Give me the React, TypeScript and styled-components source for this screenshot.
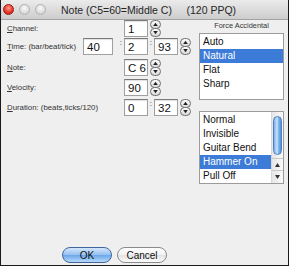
import React from 'react'
import styled, { createGlobalStyle } from 'styled-components'

const Global = createGlobalStyle`
  html, body {
    margin: 0;
    padding: 0;
    background: #fff;
  }
`

const Window = styled.div`
  width: 289px;
  height: 266px;
  box-sizing: border-box;
  border: 1px solid #1a1a1a;
  border-top: none;
  background: #efefef;
  display: flex;
  flex-direction: column;
  font-family: 'Liberation Sans', Arial, sans-serif;
  color: #1b1b1b;
`

const TitleBar = styled.div`
  height: 19px;
  flex: none;
  display: flex;
  align-items: center;
  padding-left: 2px;
  background: linear-gradient(#ebebeb, #cdcdcd);
  border-bottom: 1px solid #a3a3a3;
`

const Light = styled.span<{ $red?: boolean }>`
  width: 11px;
  height: 11px;
  border-radius: 50%;
  margin-right: 5px;
  box-sizing: border-box;
  border: 1px solid ${(p) => (p.$red ? '#9c1b14' : '#b0b0b0')};
  background: ${(p) =>
    p.$red
      ? 'radial-gradient(circle at 50% 35%, #ff9c8c 0%, #e63b2e 55%, #b81d12 100%)'
      : 'radial-gradient(circle at 50% 35%, #fafafa 0%, #dedede 60%, #c4c4c4 100%)'};
`

const Title = styled.span`
  margin-left: 10px;
  font-size: 10.5px;
  white-space: pre;
  color: #262626;
`

const Body = styled.div`
  display: flex;
  flex: 1;
`

const LeftCol = styled.div`
  width: 198px;
  padding-left: 6px;
  box-sizing: border-box;
`

const Row = styled.div<{ $top: number }>`
  display: flex;
  align-items: center;
  height: 17px;
  margin-top: ${(p) => p.$top}px;
`

const Label = styled.span<{ $w: number }>`
  width: ${(p) => p.$w}px;
  flex: none;
  font-size: 7.8px;
  color: #333;
  white-space: nowrap;
`

const Field = styled.div<{ $w: number }>`
  width: ${(p) => p.$w}px;
  height: 17px;
  flex: none;
  box-sizing: border-box;
  background: #fff;
  border: 1px solid #a0a0a0;
  border-top-color: #7a7a7a;
  box-shadow: inset 0 1px 1px rgba(0, 0, 0, 0.12);
  font-size: 11.5px;
  line-height: 16px;
  padding-left: 3px;
  color: #111;
  white-space: nowrap;
  overflow: hidden;
`

const Colon = styled.span<{ $w: number }>`
  width: ${(p) => p.$w}px;
  flex: none;
  align-self: flex-start;
  text-align: right;
  padding-right: 2px;
  box-sizing: border-box;
  font-size: 8px;
  line-height: 10px;
  color: #333;
`

const SpinWrap = styled.span`
  margin-left: 2px;
  display: flex;
`

const Spinner = () => (
  <SpinWrap>
    <svg width="11" height="17" viewBox="0 0 11 17">
      <defs>
        <linearGradient id="sg" x1="0" y1="0" x2="0" y2="1">
          <stop offset="0" stopColor="#ffffff" />
          <stop offset="1" stopColor="#d6d6d6" />
        </linearGradient>
      </defs>
      <rect x="0.5" y="0.5" width="10" height="8" rx="4" fill="url(#sg)" stroke="#6e6e6e" />
      <rect x="0.5" y="8.5" width="10" height="8" rx="4" fill="url(#sg)" stroke="#6e6e6e" />
      <path d="M3.2 6 L5.5 2.8 L7.8 6 Z" fill="#222" />
      <path d="M3.2 11 L5.5 14.2 L7.8 11 Z" fill="#222" />
    </svg>
  </SpinWrap>
)

const RightCol = styled.div`
  width: 85px;
  display: flex;
  flex-direction: column;
`

const GroupLabel = styled.div`
  height: 13px;
  font-size: 7.4px;
  line-height: 11px;
  text-align: center;
  color: #333;
`

const ListBox = styled.div<{ $h: number; $top: number }>`
  height: ${(p) => p.$h}px;
  margin-top: ${(p) => p.$top}px;
  box-sizing: border-box;
  background: #fff;
  border: 1px solid #9b9b9b;
  padding-top: 1px;
  display: flex;
`

const Items = styled.div`
  flex: 1;
`

const Item = styled.div<{ $sel?: boolean }>`
  height: 14px;
  line-height: 14px;
  padding-left: 3px;
  font-size: 10px;
  color: ${(p) => (p.$sel ? '#fff' : '#111')};
  background: ${(p) => (p.$sel ? '#3c7bd8' : 'transparent')};
`

const ScrollBar = styled.div`
  width: 11px;
  display: flex;
  flex-direction: column;
  border-left: 1px solid #d8d8d8;
  background: linear-gradient(90deg, #e6e6e6, #fafafa);
  margin-top: -1px;
`

const Thumb = styled.div`
  margin: 4px 1px 0;
  height: 38px;
  border-radius: 5px;
  border: 1px solid #4f7fc2;
  background: linear-gradient(90deg, #7aaeea, #cfe4fb 45%, #8bbcf0 60%, #4d8fe0);
`

const Arrow = styled.div<{ $top: number }>`
  margin-top: ${(p) => p.$top}px;
  height: 12px;
  display: flex;
  align-items: center;
  justify-content: center;
  border-top: 1px solid #c9c9c9;
`

const Footer = styled.div`
  margin-top: auto;
  display: flex;
  gap: 5px;
  padding: 0 0 2px 61px;
`

const Button = styled.div<{ $primary?: boolean }>`
  width: 50px;
  height: 16px;
  box-sizing: border-box;
  border-radius: 8px;
  display: flex;
  align-items: center;
  justify-content: center;
  font-size: 10px;
  color: #111;
  border: 1px solid ${(p) => (p.$primary ? '#40669e' : '#8a8a8a')};
  background: ${(p) =>
    p.$primary
      ? 'linear-gradient(#d4e6fa 0%, #96c1f1 48%, #6ba7ec 52%, #b6d8f8 100%)'
      : 'linear-gradient(#ffffff 0%, #f2f2f2 48%, #e3e3e3 52%, #fbfbfb 100%)'};
`

const Tri = ({ up }: { up?: boolean }) => (
  <svg width="5" height="4" viewBox="0 0 5 4">
    <path d={up ? 'M0 4 L2.5 0 L5 4 Z' : 'M0 0 L2.5 4 L5 0 Z'} fill="#333" />
  </svg>
)

export default function App() {
  return (
    <>
      <Global />
      <Window>
        <TitleBar>
          <Light $red />
          <Light />
          <Light />
          <Title>{'Note (C5=60=Middle C)     (120 PPQ)'}</Title>
        </TitleBar>
        <Body>
          <LeftCol>
            <Row $top={0}>
              <Label $w={117}>
                <u>C</u>hannel:
              </Label>
              <Field $w={24}>1</Field>
              <Spinner />
            </Row>
            <Row $top={1}>
              <Label $w={76}>
                <u>T</u>ime: (bar/beat/tick)
              </Label>
              <Field $w={30}>40</Field>
              <Colon $w={11}>:</Colon>
              <Field $w={24}>2</Field>
              <Colon $w={6}>:</Colon>
              <Field $w={24}>93</Field>
              <Spinner />
            </Row>
            <Row $top={4}>
              <Label $w={117}>
                <u>N</u>ote:
              </Label>
              <Field $w={24}>C 6</Field>
              <Spinner />
            </Row>
            <Row $top={3}>
              <Label $w={117}>
                <u>V</u>elocity:
              </Label>
              <Field $w={24}>90</Field>
              <Spinner />
            </Row>
            <Row $top={3}>
              <Label $w={117}>
                <u>D</u>uration: (beats,ticks/120)
              </Label>
              <Field $w={24}>0</Field>
              <Colon $w={6}>:</Colon>
              <Field $w={24}>32</Field>
              <Spinner />
            </Row>
          </LeftCol>
          <RightCol>
            <GroupLabel>Force Accidental</GroupLabel>
            <ListBox $h={67} $top={0}>
              <Items>
                <Item>Auto</Item>
                <Item $sel>Natural</Item>
                <Item>Flat</Item>
                <Item>Sharp</Item>
              </Items>
            </ListBox>
            <ListBox $h={73} $top={11}>
              <Items>
                <Item>Normal</Item>
                <Item>Invisible</Item>
                <Item>Guitar Bend</Item>
                <Item $sel>Hammer On</Item>
                <Item>Pull Off</Item>
              </Items>
              <ScrollBar>
                <Thumb />
                <Arrow $top={3}>
                  <Tri up />
                </Arrow>
                <Arrow $top={0}>
                  <Tri />
                </Arrow>
              </ScrollBar>
            </ListBox>
          </RightCol>
        </Body>
        <Footer>
          <Button $primary>OK</Button>
          <Button>Cancel</Button>
        </Footer>
      </Window>
    </>
  )
}
